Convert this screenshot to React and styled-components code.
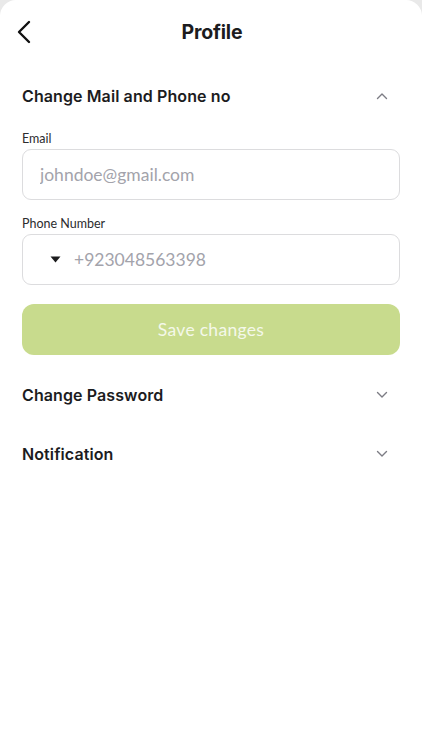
import React, { useState } from 'react';
import styled, { createGlobalStyle } from 'styled-components';

const GlobalStyle = createGlobalStyle`
  html, body {
    margin: 0;
    padding: 0;
    background: #e9e9e9;
  }
  * {
    box-sizing: border-box;
  }
`;

const Screen = styled.div`
  width: 422px;
  min-height: 750px;
  background: #fff;
  border-radius: 16px 16px 0 0;
  font-family: Inter, "Noto Sans", sans-serif;
  color: #1c1c1e;
`;

const Header = styled.div`
  height: 64px;
  display: grid;
  grid-template-columns: 48px 1fr 48px;
  align-items: center;
  padding: 0 6px 0 8px;
`;

const BackButton = styled.button`
  border: none;
  background: transparent;
  padding: 0;
  width: 32px;
  height: 32px;
  display: flex;
  align-items: center;
  justify-content: center;
  cursor: pointer;
`;

const Title = styled.h1`
  margin: 0;
  text-align: center;
  font-size: 19.5px;
  font-weight: 700;
  letter-spacing: -0.2px;
`;

const Body = styled.div`
  padding: 0 22px;
`;

const SectionHeader = styled.div`
  height: ${(p) => p.$h}px;
  display: flex;
  align-items: center;
  justify-content: space-between;
  padding-right: 12px;
  cursor: pointer;
`;

const SectionTitle = styled.h2`
  margin: 0;
  font-size: 16px;
  font-weight: 600;
  letter-spacing: 0.1px;
`;

const Form = styled.div`
  display: flex;
  flex-direction: column;
  padding-top: 3px;
`;

const Label = styled.label`
  font-family: Lato, "Open Sans", sans-serif;
  font-size: 12.5px;
  color: #2c2c2e;
  margin-bottom: 3px;
`;

const Field = styled.div`
  height: 51px;
  border: 1px solid #dcdcde;
  border-radius: 9px;
  display: flex;
  align-items: center;
  padding-left: ${(p) => p.$pad}px;
  margin-bottom: ${(p) => p.$mb}px;
`;

const Input = styled.input`
  border: none;
  outline: none;
  flex: 1;
  min-width: 0;
  font-family: Lato, "Open Sans", sans-serif;
  font-size: 17.5px;
  color: #1c1c1e;
  background: transparent;
  &::placeholder {
    color: #a3a3ab;
  }
`;

const CountryPicker = styled.div`
  width: 49px;
  padding-left: 27px;
  display: flex;
  align-items: center;
`;

const SaveButton = styled.button`
  height: 51px;
  border: none;
  border-radius: 12px;
  background: #c8db8d;
  color: #f4f8ea;
  font-family: Lato, "Open Sans", sans-serif;
  font-size: 17.5px;
  letter-spacing: 0.3px;
  cursor: pointer;
  margin-bottom: 11px;
`;

const Chevron = ({ up }) => (
  <svg width="12" height="8" viewBox="0 0 12 8" fill="none">
    <path
      d={up ? 'M1.5 6.5 L6 2 L10.5 6.5' : 'M1.5 1.5 L6 6 L10.5 1.5'}
      stroke="#7c7c84"
      strokeWidth="1.4"
      strokeLinecap="round"
      strokeLinejoin="round"
    />
  </svg>
);

export default function App() {
  const [open, setOpen] = useState('mail');

  const toggle = (key) => setOpen(open === key ? null : key);

  return (
    <>
      <GlobalStyle />
      <Screen>
        <Header>
          <BackButton aria-label="Back">
            <svg width="16" height="24" viewBox="0 0 16 24" fill="none">
              <path d="M13 2 L3 12 L13 22" stroke="#111" strokeWidth="2.4" strokeLinecap="round" strokeLinejoin="round" />
            </svg>
          </BackButton>
          <Title>Profile</Title>
          <span />
        </Header>
        <Body>
          <SectionHeader $h={64} onClick={() => toggle('mail')}>
            <SectionTitle>Change Mail and Phone no</SectionTitle>
            <Chevron up={open === 'mail'} />
          </SectionHeader>
          {open === 'mail' && (
            <Form>
              <Label>Email</Label>
              <Field $pad={15} $mb={16}>
                <Input placeholder="johndoe@gmail.com" />
              </Field>
              <Label>Phone Number</Label>
              <Field $pad={0} $mb={19}>
                <CountryPicker>
                  <svg width="11" height="7" viewBox="0 0 11 7">
                    <path d="M0.5 0.5 L10.5 0.5 L5.5 6.5 Z" fill="#1c1c1e" />
                  </svg>
                </CountryPicker>
                <Input placeholder="+923048563398" />
              </Field>
              <SaveButton>Save changes</SaveButton>
            </Form>
          )}
          <SectionHeader $h={58} onClick={() => toggle('password')}>
            <SectionTitle>Change Password</SectionTitle>
            <Chevron up={open === 'password'} />
          </SectionHeader>
          <SectionHeader $h={60} onClick={() => toggle('notification')}>
            <SectionTitle>Notification</SectionTitle>
            <Chevron up={open === 'notification'} />
          </SectionHeader>
        </Body>
      </Screen>
    </>
  );
}
